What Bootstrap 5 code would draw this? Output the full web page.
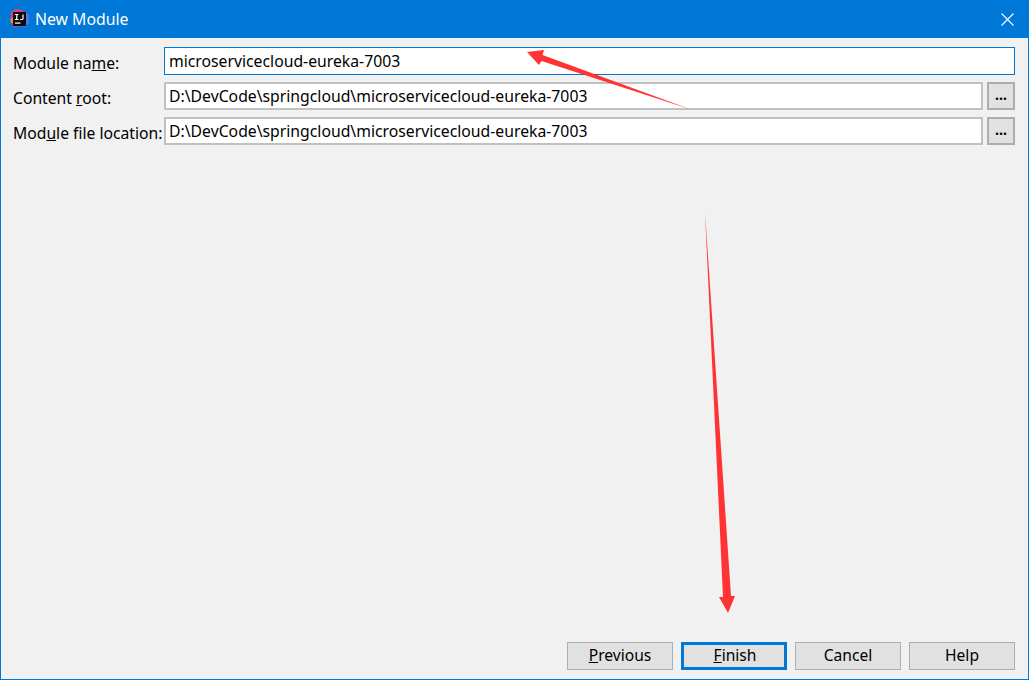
<!DOCTYPE html>
<html lang="en">
<head>
<meta charset="utf-8">
<title>New Module</title>
<link rel="stylesheet" href="https://cdn.jsdelivr.net/npm/bootstrap@5.3.0/dist/css/bootstrap.min.css">
<style>
html,body{height:100%;margin:0}
body{background:#f1f1f1;font-family:"Noto Sans","Open Sans",sans-serif;color:#000;overflow:hidden}
.win{position:relative;width:1029px;height:680px;border:1px solid #0078d7;border-top:0;background:#f1f1f1}
.tbar{height:38px;background:#0078d7;color:#fff;font-size:15.8px;margin:0 -1px;padding:0 15px 0 10px;column-gap:5px}
.tbar svg{display:block}
.ttext{padding-top:2px}
.fields{padding:9px 13px 0 12px;row-gap:7px}
.frow{height:28px}
.flabel{width:151px;flex:none;font-size:15.7px;white-space:nowrap;line-height:28px;padding-top:2px}
.fbox{height:28px;background:#fff;border:2px solid #c0c0c0;font-size:15.75px;line-height:24px;padding:0 3px;border-radius:0;color:#000;min-width:0}
.fbox.act{border:1px solid #0078d7;padding:0 4px;line-height:26px}
.dots{width:28px;height:28px;flex:none;padding:0 0 2px;background:#e1e1e1;border:2px solid #adadad;border-radius:0;font-size:14px;line-height:20px;color:#000;font-weight:700}
.foot{padding:0 13px 9px 0;column-gap:8px}
.fbtn{width:106px;height:28px;padding:0 0 2px;background:#e1e1e1;border:1px solid #adadad;border-radius:0;font-size:15.6px;line-height:22px;color:#000}
.fbtn.dflt{border:3px solid #0078d7;line-height:20px;padding:0 0 2px 2px}
.spread{flex:1 1 auto}
.arrows{position:absolute;left:-1px;top:0;pointer-events:none}
</style>
</head>
<body>
<div class="win d-flex flex-column">
  <div class="tbar d-flex align-items-center">
    <svg width="20" height="20" viewBox="0 0 20 20">
      <path d="M1 3 L6 0 L12 1 L14 3 L14 17 L3 18 L1 12 Z" fill="#ea3a86"/>
      <path d="M14 2 L19 5 L19 14 L15 18 L12 18 Z" fill="#4f74e8"/>
      <path d="M0 10 L3 9 L3 14 L1 14 Z" fill="#f58a1f"/>
      <rect x="3" y="3" width="13" height="14" fill="#0b0b0b"/>
      <path d="M5 5.5 H8.5 M6.75 5.5 V10.5 M5 10.5 H8.5 M13 5.5 V9.5 Q13 10.5 12 10.5 H10" stroke="#fff" stroke-width="1.2" fill="none"/>
      <rect x="5" y="13.5" width="5.5" height="1.2" fill="#fff"/>
    </svg>
    <span class="ttext flex-grow-1">New Module</span>
    <svg width="13" height="13" viewBox="0 0 13 13"><path d="M0.5 0.5 L12.5 12.5 M12.5 0.5 L0.5 12.5" stroke="#fff" stroke-width="1.1"/></svg>
  </div>
  <div class="fields d-flex flex-column">
    <div class="frow d-flex">
      <label class="flabel">Module na<u>m</u>e:</label>
      <div class="fbox act flex-grow-1">microservicecloud-eureka-7003</div>
    </div>
    <div class="frow d-flex">
      <label class="flabel">Content <u>r</u>oot:</label>
      <div class="fbox flex-grow-1">D:\DevCode\springcloud\microservicecloud-eureka-7003</div>
      <button type="button" class="btn dots ms-1">...</button>
    </div>
    <div class="frow d-flex">
      <label class="flabel">Mod<u>u</u>le file location:</label>
      <div class="fbox flex-grow-1">D:\DevCode\springcloud\microservicecloud-eureka-7003</div>
      <button type="button" class="btn dots ms-1">...</button>
    </div>
  </div>
  <div class="spread"></div>
  <div class="foot d-flex justify-content-end">
    <button type="button" class="btn fbtn"><u>P</u>revious</button>
    <button type="button" class="btn fbtn dflt"><u>F</u>inish</button>
    <button type="button" class="btn fbtn">Cancel</button>
    <button type="button" class="btn fbtn">Help</button>
  </div>
  <svg class="arrows" width="1029" height="680" viewBox="0 0 1029 680">
    <polygon fill="#ff3333" points="527,52 544,50 542.5,55 691,109.5 541.5,61 539,65"/>
    <polygon fill="#ff3333" points="705,212 731,596 735,596 728,613 719,597 723,597"/>
  </svg>
</div>
</body>
</html>
